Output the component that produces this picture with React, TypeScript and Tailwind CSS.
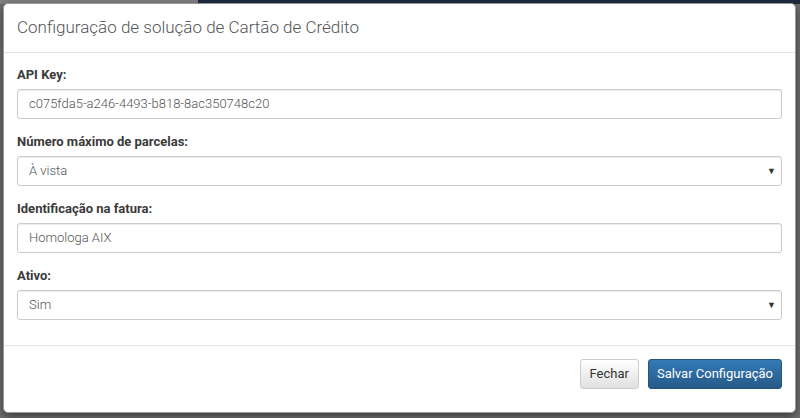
const fields = [
  { label: 'API Key:', value: 'c075fda5-a246-4493-b818-8ac350748c20', select: false },
  { label: 'Número máximo de parcelas:', value: 'À vista', select: true },
  { label: 'Identificação na fatura:', value: 'Homologa AIX', select: false },
  { label: 'Ativo:', value: 'Sim', select: true },
];

const Field = ({ label, value, select }: { label: string; value: string; select: boolean }) => (
  <div className="flex flex-col">
    <label className="text-[13px] font-bold text-[#3a3a3a] leading-[18px] mb-[5px]">{label}</label>
    <div className="h-[30px] border border-[#ccc] rounded-[3px] bg-white flex items-center justify-between pl-[11px] pr-[5px] shadow-[inset_0_1px_1px_rgba(0,0,0,0.075)]">
      <span className="text-[13px] text-[#555] font-light">{value}</span>
      {select && <span className="text-[9px] text-[#333] leading-none">▼</span>}
    </div>
  </div>
);

const App = () => {
  return (
    <div className="w-[800px] h-[418px] bg-[#6e6e6e] flex flex-col font-['Roboto',sans-serif] overflow-hidden">
      <div className="h-[4px] flex shrink-0">
        <div className="w-[198px] bg-[#808080]" />
        <div className="flex-1 bg-[#1c2c40]" />
      </div>
      <div className="ml-[3px] w-[793px] h-[410px] -mt-[1px] bg-white rounded-[5px] border border-[#999] shadow-[0_3px_9px_rgba(0,0,0,0.5)] flex flex-col">
        <div className="h-[49px] border-b border-[#e5e5e5] flex items-center px-[13px] shrink-0">
          <h4 className="text-[17px] text-[#555] font-light">Configuração de solução de Cartão de Crédito</h4>
        </div>
        <div className="px-[13px] pt-[13px] flex flex-col gap-[14px] h-[293px] border-b border-[#e5e5e5] shrink-0">
          {fields.map((f) => (
            <Field key={f.label} {...f} />
          ))}
        </div>
        <div className="flex justify-end gap-[9px] px-[13px] pt-[13px]">
          <button className="h-[30px] px-[9px] rounded-[3px] border border-[#ccc] bg-gradient-to-b from-white to-[#e0e0e0] text-[13px] text-[#333]">
            Fechar
          </button>
          <button className="h-[30px] px-[8px] rounded-[3px] border border-[#245580] bg-gradient-to-b from-[#337ab7] to-[#265a88] text-[13px] text-white">
            Salvar Configuração
          </button>
        </div>
      </div>
    </div>
  );
};

export default App;
